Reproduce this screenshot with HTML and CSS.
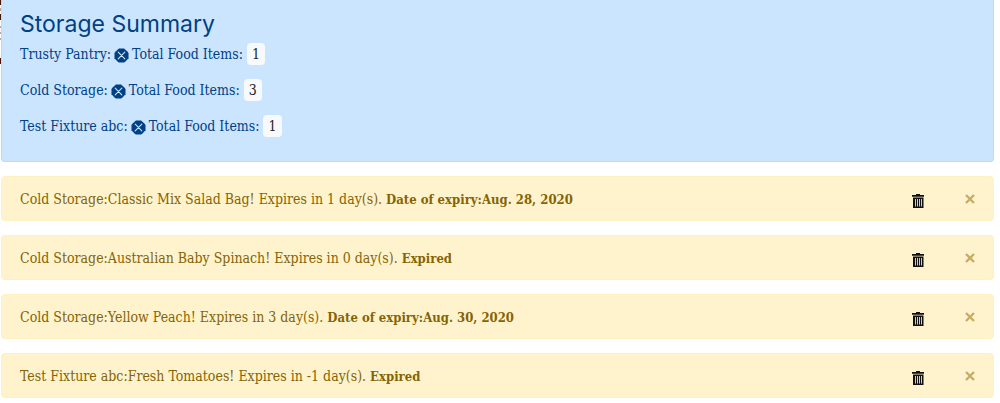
FILE: index.html
```html
<!DOCTYPE html>
<html lang="en">
<head>
<meta charset="utf-8">
<title>Storage Summary</title>
<link rel="stylesheet" href="styles.css">
</head>
<body>
<svg class="symbols" aria-hidden="true">
  <symbol id="octagon-x" viewBox="0 0 16 16">
    <path fill="currentColor" d="M5.200 .5h5.600L12.500 2 14 3.500 15.500 5.200v5.600L14 12.500 12.500 14 10.800 15.500H5.200L3.500 14 2 12.500 .5 10.800V5.200L2 3.500 3.500 2z"/>
    <path fill="none" stroke="#cce5ff" stroke-width="1.200" stroke-linecap="round" d="M4.500 4.500l7 7M11.500 4.500l-7 7"/>
  </symbol>
  <symbol id="trash" viewBox="0 0 14 16">
    <path fill="currentColor" d="M5 1h4v1h4v1.700H1V2h4z"/>
    <path fill="currentColor" d="M2 4.500h10.500V15H2z"/>
    <path fill="none" stroke="#d8cda6" d="M4.500 6v7.500M6.500 6v7.500M8.500 6v7.500M10.500 6v7.500"/>
  </symbol>
  <symbol id="cross" viewBox="0 0 12 12">
    <path fill="none" stroke="currentColor" stroke-width="2.400" d="M2 2l8 8M10 2l-8 8"/>
  </symbol>
</svg>
<div class="backdrop" aria-hidden="true"></div>
<main class="page">
  <section class="alert summary">
    <h1 class="summary-title">Storage Summary</h1>
    <p class="storage">Trusty Pantry: <button class="icon-button" type="button" aria-label="Remove Trusty Pantry"><svg class="octagon"><use href="#octagon-x"/></svg></button> Total Food Items: <span class="badge">1</span></p>
    <p class="storage">Cold Storage: <button class="icon-button" type="button" aria-label="Remove Cold Storage"><svg class="octagon"><use href="#octagon-x"/></svg></button> Total Food Items: <span class="badge">3</span></p>
    <p class="storage">Test Fixture abc: <button class="icon-button" type="button" aria-label="Remove Test Fixture abc"><svg class="octagon"><use href="#octagon-x"/></svg></button> Total Food Items: <span class="badge">1</span></p>
  </section>
  <div class="alert warning">
    <p class="message">Cold Storage:Classic Mix Salad Bag! Expires in 1 day(s). <strong>Date of expiry:Aug. 28, 2020</strong></p>
    <button class="icon-button delete" type="button" aria-label="Delete item"><svg class="trash"><use href="#trash"/></svg></button>
    <button class="icon-button close" type="button" aria-label="Close"><svg class="cross"><use href="#cross"/></svg></button>
  </div>
  <div class="alert warning">
    <p class="message">Cold Storage:Australian Baby Spinach! Expires in 0 day(s). <strong>Expired</strong></p>
    <button class="icon-button delete" type="button" aria-label="Delete item"><svg class="trash"><use href="#trash"/></svg></button>
    <button class="icon-button close" type="button" aria-label="Close"><svg class="cross"><use href="#cross"/></svg></button>
  </div>
  <div class="alert warning">
    <p class="message">Cold Storage:Yellow Peach! Expires in 3 day(s). <strong>Date of expiry:Aug. 30, 2020</strong></p>
    <button class="icon-button delete" type="button" aria-label="Delete item"><svg class="trash"><use href="#trash"/></svg></button>
    <button class="icon-button close" type="button" aria-label="Close"><svg class="cross"><use href="#cross"/></svg></button>
  </div>
  <div class="alert warning">
    <p class="message">Test Fixture abc:Fresh Tomatoes! Expires in -1 day(s). <strong>Expired</strong></p>
    <button class="icon-button delete" type="button" aria-label="Delete item"><svg class="trash"><use href="#trash"/></svg></button>
    <button class="icon-button close" type="button" aria-label="Close"><svg class="cross"><use href="#cross"/></svg></button>
  </div>
</main>
</body>
</html>
```
FILE: styles.css
```css
* {
  box-sizing: border-box;
}

body {
  margin: 0;
  background: #fff;
  font-family: "DejaVu Serif Condensed", "Liberation Serif", serif;
  font-size: 14px;
  line-height: 22px;
}

.symbols {
  display: none;
}

/* Sliver of the photo behind the page edge */
.backdrop {
  position: absolute;
  top: 0;
  left: 0;
  width: 2px;
  height: 66px;
  background: linear-gradient(#4a1505 0 5px, #fff 5px 8px, #b9a99c 8px 11px, #fff 11px 14px, #4a1505 14px 20px, #fff 20px 26px, #b9a99c 26px 28px, #fff 28px 32px, #b9a99c 32px 34px, #fff 34px 38px, #b9a99c 38px 40px, #fff 40px 58px, #4a1505 58px 64px, #fff 64px);
}

.page {
  position: relative;
  display: flex;
  flex-direction: column;
  gap: 14px;
  padding: 0 6px 0 1px;
}

.alert {
  border: 1px solid;
  border-radius: 4px;
  padding: 11px 18px;
}

.summary {
  border-color: #b8daff;
  border-top: 0;
  border-radius: 0 0 4px 4px;
  background: #cce5ff;
  color: #004085;
}

.summary-title {
  margin: 0 0 6px;
  font: 400 23px/26px Inter, "Open Sans", sans-serif;
}

.storage {
  margin: 0 0 14px;
}

.storage:last-child {
  margin-bottom: 13px;
}

.badge {
  display: inline-block;
  padding: 0 5px;
  border-radius: 4px;
  background: #f8f9fa;
  color: #212529;
  font-size: 14px;
  line-height: 22px;
}

.icon-button {
  border: 0;
  padding: 0;
  background: none;
  color: inherit;
  cursor: pointer;
}

.octagon {
  display: block;
  width: 15px;
  height: 15px;
}

.storage .icon-button {
  margin: 0 -1px;
  vertical-align: -4px;
}

.warning {
  display: flex;
  align-items: center;
  padding-right: 17px;
  border-color: #fff0c2;
  background: #fff3cd;
  color: #856404;
}

.message {
  flex: 1;
  margin: 0;
  padding-top: 1px;
  line-height: 20px;
}

.message strong {
  font-size: 13px;
  line-height: 1;
}

.delete {
  padding-top: 4px;
  color: #111;
}

.trash {
  display: block;
  width: 14px;
  height: 16px;
}

.close {
  margin-left: 39px;
  color: #c4ad66;
}

.cross {
  display: block;
  width: 12px;
  height: 12px;
}
```
